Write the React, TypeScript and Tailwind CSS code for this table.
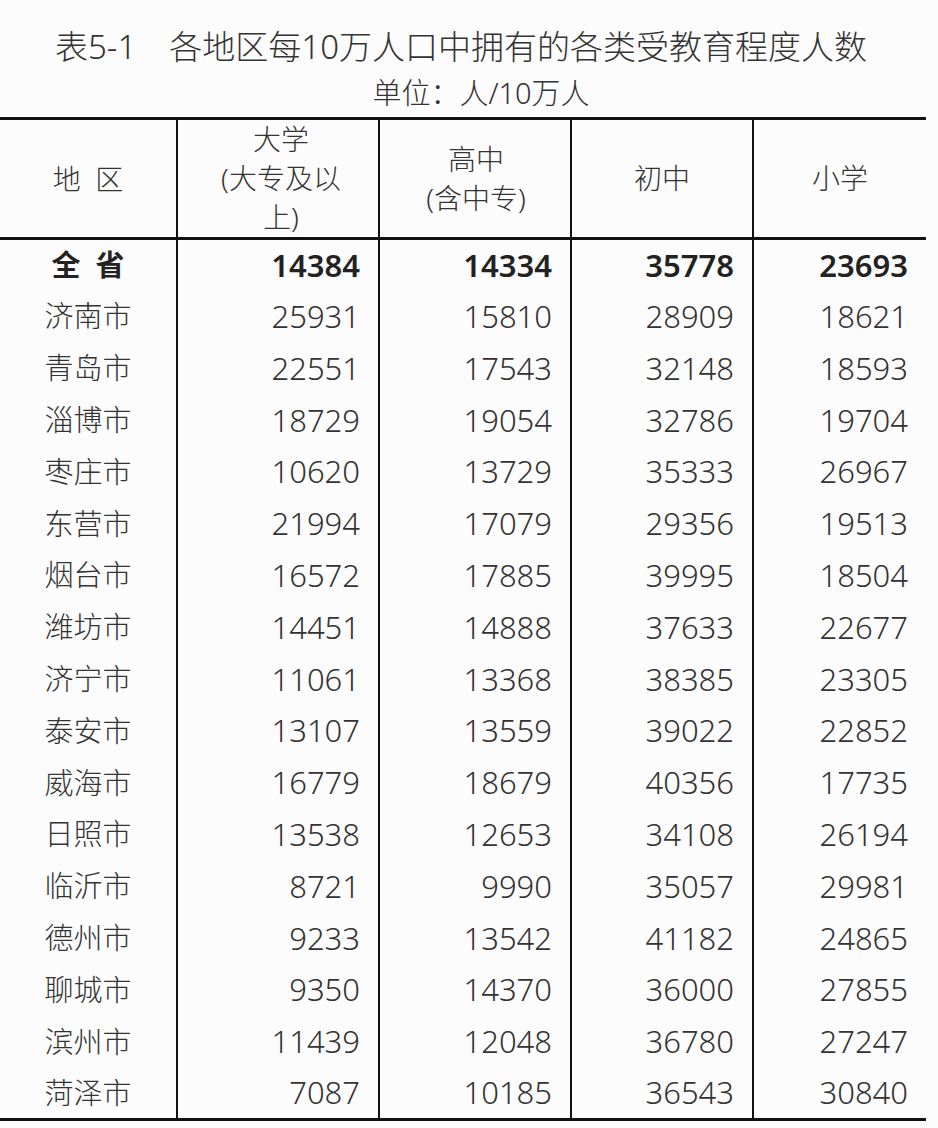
const rows: [string, string, string, string, string][] = [
  ["济南市", "25931", "15810", "28909", "18621"],
  ["青岛市", "22551", "17543", "32148", "18593"],
  ["淄博市", "18729", "19054", "32786", "19704"],
  ["枣庄市", "10620", "13729", "35333", "26967"],
  ["东营市", "21994", "17079", "29356", "19513"],
  ["烟台市", "16572", "17885", "39995", "18504"],
  ["潍坊市", "14451", "14888", "37633", "22677"],
  ["济宁市", "11061", "13368", "38385", "23305"],
  ["泰安市", "13107", "13559", "39022", "22852"],
  ["威海市", "16779", "18679", "40356", "17735"],
  ["日照市", "13538", "12653", "34108", "26194"],
  ["临沂市", "8721", "9990", "35057", "29981"],
  ["德州市", "9233", "13542", "41182", "24865"],
  ["聊城市", "9350", "14370", "36000", "27855"],
  ["滨州市", "11439", "12048", "36780", "27247"],
  ["菏泽市", "7087", "10185", "36543", "30840"],
];

const font = "font-['Noto_Sans','Noto_Sans_CJK_SC',sans-serif]";

export default function App() {
  return (
    <div className={`w-[938px] h-[1128px] bg-[#fcfcfc] text-[#333] font-light ${font} overflow-hidden`}>
      <div className="pt-[25px] h-[69px] text-center text-[33px] leading-[44px] pr-[16px] whitespace-pre">
        表5-1　各地区每10万人口中拥有的各类受教育程度人数
      </div>
      <div className="mt-[4px] h-[40px] text-center text-[29px] leading-[40px] pl-[24px]">
        单位：人/10万人
      </div>
      <table className="mt-[4px] w-[926px] table-fixed border-collapse border-t-[3px] border-b-[3px] border-[#111]">
        <colgroup>
          <col className="w-[177px]" />
          <col className="w-[202px]" />
          <col className="w-[192px]" />
          <col className="w-[182px]" />
          <col className="w-[173px]" />
        </colgroup>
        <thead>
          <tr className="h-[119px] border-b-[3px] border-[#111] text-[28px] leading-[39px]">
            <th className="font-light text-center whitespace-pre pt-[2px]">地  区</th>
            <th className="font-light text-center border-l-2 border-[#111] pl-[6px]">
              大学
              <br />
              (大专及以
              <br />
              上)
            </th>
            <th className="font-light text-center border-l-2 border-[#111] pl-[2px]">
              高中
              <br />
              (含中专)
            </th>
            <th className="font-light text-center border-l-2 border-[#111]">初中</th>
            <th className="font-light text-center border-l-2 border-[#111]">小学</th>
          </tr>
        </thead>
        <tbody className="text-[31px]">
          <tr className="h-[51.8px] font-semibold text-[#222]">
            <td className="text-center whitespace-pre text-[29px]">全  省</td>
            <td className="text-right pr-[18px] border-l-2 border-[#111]">14384</td>
            <td className="text-right pr-[18px] border-l-2 border-[#111]">14334</td>
            <td className="text-right pr-[18px] border-l-2 border-[#111]">35778</td>
            <td className="text-right pr-[18px] border-l-2 border-[#111]">23693</td>
          </tr>
          {rows.map((r) => (
            <tr key={r[0]} className="h-[51.8px]">
              <td className="text-center text-[29px]">{r[0]}</td>
              <td className="text-right pr-[18px] border-l-2 border-[#111]">{r[1]}</td>
              <td className="text-right pr-[18px] border-l-2 border-[#111]">{r[2]}</td>
              <td className="text-right pr-[18px] border-l-2 border-[#111]">{r[3]}</td>
              <td className="text-right pr-[18px] border-l-2 border-[#111]">{r[4]}</td>
            </tr>
          ))}
        </tbody>
      </table>
    </div>
  );
}
